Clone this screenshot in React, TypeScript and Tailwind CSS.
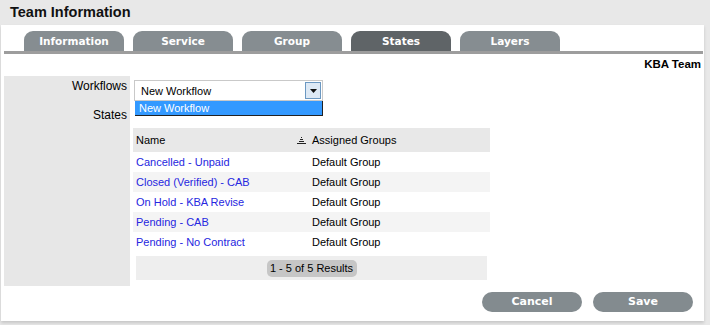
import React from 'react';

const tabs = ['Information', 'Service', 'Group', 'States', 'Layers'];

const rows = [
  'Cancelled - Unpaid',
  'Closed (Verified) - CAB',
  'On Hold - KBA Revise',
  'Pending - CAB',
  'Pending - No Contract',
];

const SortIcon = () => (
  <svg width="9" height="9" viewBox="0 0 9 9" className="block" shapeRendering="crispEdges">
    <rect x="4" y="1" width="1" height="1" fill="#222" />
    <rect x="3" y="3" width="3" height="1" fill="#222" />
    <rect x="2" y="5" width="5" height="1" fill="#222" />
    <rect x="0" y="7" width="9" height="1" fill="#222" />
  </svg>
);

export default function App() {
  return (
    <div className="w-[710px] h-[325px] overflow-hidden bg-[#e8e8e8] text-[12px] text-black font-['Liberation_Sans',Arial,sans-serif]">
      {/* Header */}
      <div className="h-[25px] pl-[10px] flex items-center text-[14.5px] font-bold text-[#111]">
        Team Information
      </div>

      {/* Panel */}
      <div className="ml-[1px] w-[703px] h-[296px] bg-white shadow-[0_2px_3px_rgba(0,0,0,0.15)]">
        <div className="pt-[6px] pl-[23px] flex gap-[9px]">
          {tabs.map((t) => (
            <div
              key={t}
              className={`w-[100px] h-[20px] pt-[2px] rounded-t-[9px] flex items-center justify-center text-white font-bold text-[10.5px] font-['DejaVu_Sans',Verdana,sans-serif] ${
                t === 'States' ? 'bg-[#5f6467]' : 'bg-[#868d91]'
              }`}
            >
              {t}
            </div>
          ))}
        </div>
        <div className="ml-[3px] w-[699px] h-[3px] bg-[#9d9d9d]" />

        <div className="h-[22px] pr-[3px] flex items-center justify-end font-bold text-[11.5px]">KBA Team</div>

        <div className="flex">
          {/* Labels column */}
          <div className="ml-[3px] w-[126px] h-[210px] bg-[#e7e7e7] flex flex-col items-end pr-[3px]">
            <div className="mt-[3px] leading-[14px]">Workflows</div>
            <div className="mt-[15px] leading-[14px]">States</div>
          </div>

          {/* Content */}
          <div className="ml-[3px] w-[357px] flex flex-col text-[11px]">
            <div className="relative mt-[4px] ml-[1px] w-[189px] h-[21px]">
              <div className="h-full border border-[#c9c9c9] bg-white flex items-center pl-[6px] pr-[1px]">
                <span className="flex-1 pt-[1px]">New Workflow</span>
                <div className="w-[16px] h-[17px] border border-[#6b98c2] bg-[#dde9f5] flex items-center justify-center">
                  <svg width="7" height="4" viewBox="0 0 7 4">
                    <path d="M0 0h7L3.5 4z" fill="#111" />
                  </svg>
                </div>
              </div>
              <div className="absolute left-[1px] top-[21px] w-[188px] h-[15px] bg-[#3399ff] border-r border-b border-[#222] text-white flex items-center pl-[4px] z-10">
                New Workflow
              </div>
            </div>

            <div className="mt-[27px] w-[357px]">
              <div className="h-[24px] bg-[#e8e8e8] flex items-center pt-[1px]">
                <div className="w-[176px] pl-[3px] pr-[3px] flex items-center justify-between">
                  <span>Name</span>
                  <SortIcon />
                </div>
                <div className="pl-[3px]">Assigned Groups</div>
              </div>
              {rows.map((r, i) => (
                <div key={r} className={`h-[20px] pt-[1px] flex items-center ${i % 2 === 1 ? 'bg-[#f4f4f4]' : 'bg-white'}`}>
                  <div className="w-[176px] pl-[3px] text-[#2626e0]">{r}</div>
                  <div className="pl-[3px]">Default Group</div>
                </div>
              ))}
              <div className="mt-[4px] mx-[3px] h-[24px] bg-[#eeeeee] flex items-center justify-center">
                <div className="h-[17px] w-[90px] rounded-[5px] bg-[#c6c6c6] flex items-center justify-center whitespace-nowrap">
                  1 - 5 of 5 Results
                </div>
              </div>
            </div>
          </div>
        </div>

        {/* Footer buttons */}
        <div className="mt-[6px] pr-[11px] flex justify-end gap-[11px]">
          {['Cancel', 'Save'].map((b) => (
            <button
              key={b}
              className="w-[100px] h-[20px] rounded-full bg-[#838b8f] text-white font-bold text-[11px] font-['DejaVu_Sans',Verdana,sans-serif]"
            >
              {b}
            </button>
          ))}
        </div>
      </div>
    </div>
  );
}
